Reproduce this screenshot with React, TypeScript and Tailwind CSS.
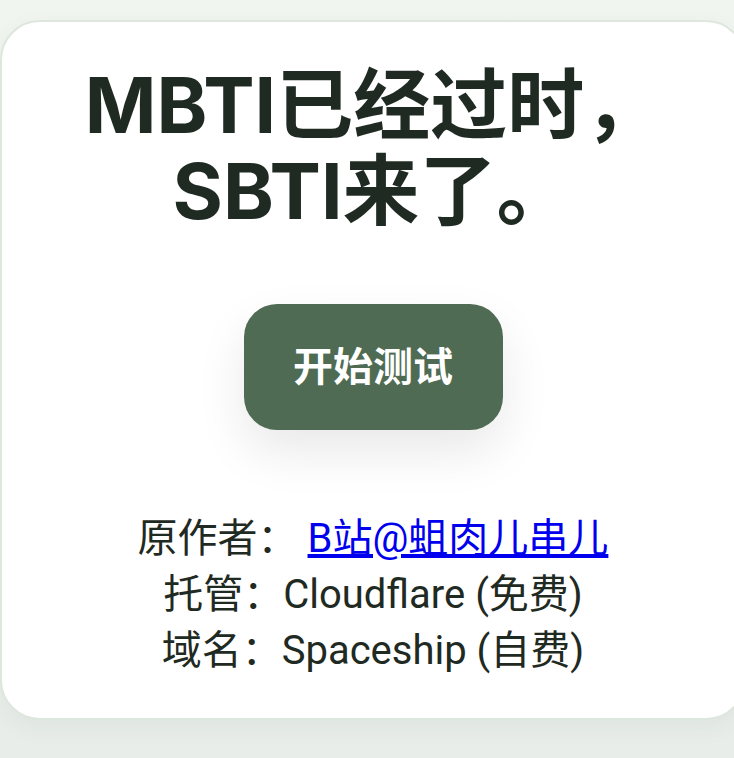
import React from 'react';

const App: React.FC = () => {
  return (
    <div className="min-h-screen overflow-hidden bg-gradient-to-b from-[#f0f5f0] to-[#e8ede9] pt-[20px] pb-[40px]">
      <div className="flex w-[746px] flex-col items-center rounded-[40px] border-2 border-[#dde7dd] bg-white pt-[40px] pb-[39px] shadow-[0_8px_24px_rgba(40,60,40,0.05)]">
        <h1 className="text-center font-['Inter','Noto_Sans_CJK_SC',sans-serif] text-[77px] leading-[86px] font-bold text-[#1f2a22]">
          MBTI已经过时，
          <br />
          SBTI来了。
        </h1>

        <button className="mt-[70px] flex h-[126px] w-[259px] items-center justify-center rounded-[33px] bg-[#4f6b53] font-['Inter','Noto_Sans_CJK_SC',sans-serif] text-[40px] font-bold text-white shadow-[0_22px_50px_rgba(0,0,0,0.09)]">
          开始测试
        </button>

        <div className="mt-[81px] text-center font-['Roboto','Noto_Sans_CJK_SC',sans-serif] text-[40px] leading-[56px] text-[#1f2a22]">
          <p>
            原作者：{' '}
            <a href="#" className="text-[#0000ee] underline">
              B站@蛆肉儿串儿
            </a>
          </p>
          <p>托管：Cloudflare (免费)</p>
          <p>域名：Spaceship (自费)</p>
        </div>
      </div>
    </div>
  );
};

export default App;
